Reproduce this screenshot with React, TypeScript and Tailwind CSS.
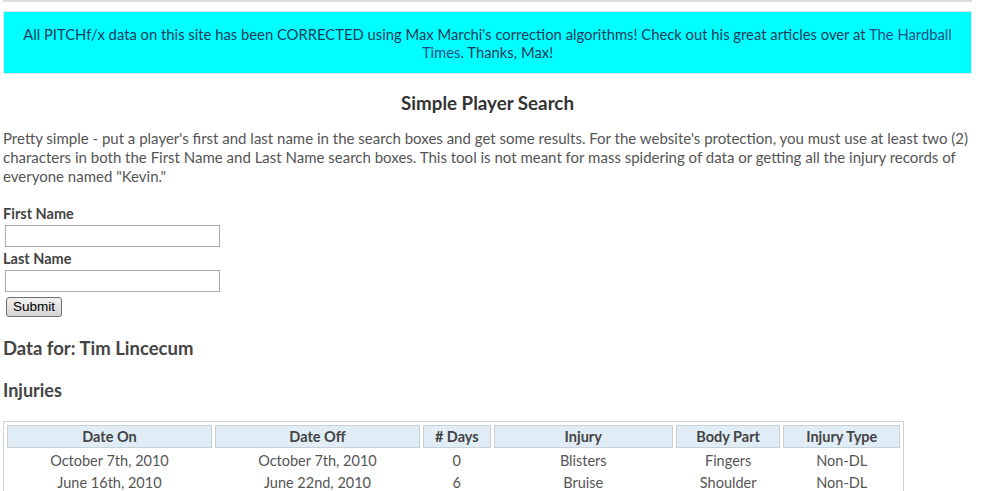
const injuries = [
  { on: "October 7th, 2010", off: "October 7th, 2010", days: "0", injury: "Blisters", part: "Fingers", type: "Non-DL" },
  { on: "June 16th, 2010", off: "June 22nd, 2010", days: "6", injury: "Bruise", part: "Shoulder", type: "Non-DL" },
];

const columns = [
  { label: "Date On", w: "w-[206px]" },
  { label: "Date Off", w: "w-[206px]" },
  { label: "# Days", w: "w-[68px]" },
  { label: "Injury", w: "w-[180px]" },
  { label: "Body Part", w: "w-[105px]" },
  { label: "Injury Type", w: "w-[117px]" },
];

export default function App() {
  return (
    <div className="min-h-screen bg-white font-['Lato',sans-serif] text-[#555]">
      <div className="w-[975px] px-[3px]">
        <div className="border-t-2 border-[#ddd]" />

        <div className="mt-[9px] border border-[#d8e8e8] bg-[#00ffff] px-[6px] pt-[13px] pb-[12px] text-center text-[14.8px] leading-[18px] text-[#1b3b5b]">
          All PITCHf/x data on this site has been CORRECTED using Max Marchi's correction algorithms! Check out his great
          articles over at <a className="text-[#1c4e82]">The Hardball Times</a>. Thanks, Max!
        </div>

        <h2 className="mt-[17px] text-center text-[18.75px] font-bold leading-[24px] text-[#333]">Simple Player Search</h2>

        <p className="mt-[14px] text-[15px] leading-[19px]">
          Pretty simple - put a player's first and last name in the search boxes and get some results. For the website's
          protection, you must use at least two (2) characters in both the First Name and Last Name search boxes. This
          tool is not meant for mass spidering of data or getting all the injury records of everyone named "Kevin."
        </p>

        <form className="mt-[19px] flex flex-col items-start">
          <label className="text-[14.5px] font-bold leading-[18px] text-[#444]">First Name</label>
          <input className="mt-[2px] ml-[2px] h-[22px] w-[215px] border border-[#a9a9a9] bg-white" />
          <label className="mt-[3px] text-[14.5px] font-bold leading-[18px] text-[#444]">Last Name</label>
          <input className="mt-[2px] ml-[2px] h-[22px] w-[215px] border border-[#a9a9a9] bg-white" />
          <button
            type="button"
            className="mt-[5px] ml-[3px] h-[20px] rounded-[3px] border border-[#707070] bg-gradient-to-b from-[#f2f2f2] to-[#d4d4d4] px-[6px] font-['Liberation_Sans',sans-serif] text-[13.5px] leading-[16px] text-black"
          >
            Submit
          </button>
        </form>

        <h2 className="mt-[19px] text-[18.5px] font-bold leading-[24px] text-[#444]">Data for: Tim Lincecum</h2>
        <h3 className="mt-[18px] text-[18px] font-bold leading-[24px] text-[#444]">Injuries</h3>

        <table className="mt-[19px] w-[901px] border-separate border-spacing-[3px] border border-[#d0d0d0] text-[14.5px]">
          <thead>
            <tr>
              {columns.map((c) => (
                <th
                  key={c.label}
                  className={`${c.w} h-[23px] border border-[#c8d0d8] bg-[#e0ecf6] p-0 pt-[1px] text-center font-bold leading-[20px] text-[#444]`}
                >
                  {c.label}
                </th>
              ))}
            </tr>
          </thead>
          <tbody>
            {injuries.map((r) => (
              <tr key={r.on} className="text-center">
                <td className="h-[19px] p-0 leading-[19px]">{r.on}</td>
                <td className="p-0 leading-[19px]">{r.off}</td>
                <td className="p-0 leading-[19px]">{r.days}</td>
                <td className="p-0 leading-[19px]">{r.injury}</td>
                <td className="p-0 leading-[19px]">{r.part}</td>
                <td className="p-0 leading-[19px]">{r.type}</td>
              </tr>
            ))}
          </tbody>
        </table>
      </div>
    </div>
  );
}
